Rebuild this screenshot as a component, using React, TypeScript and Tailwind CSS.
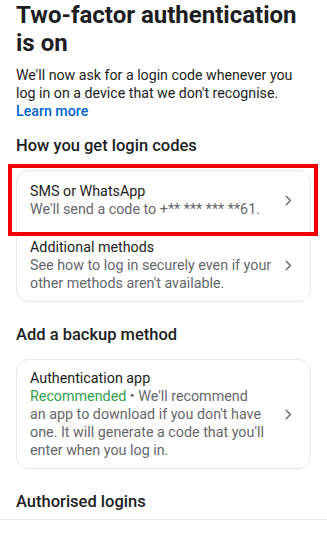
import React from 'react';

function Chevron() {
  return (
    <svg width="7" height="11" viewBox="0 0 7 11" fill="none" className="shrink-0">
      <path d="M1.3 1.3 5.4 5.5 1.3 9.7" stroke="#65676b" strokeWidth="1.4" strokeLinecap="round" strokeLinejoin="round" />
    </svg>
  );
}

interface OptionRowProps {
  title: string;
  children: React.ReactNode;
  className?: string;
}

function OptionRow({ title, children, className }: OptionRowProps) {
  return (
    <div className={`flex items-center pl-[13px] pr-[18px] ${className ?? ''}`}>
      <div className="flex-1 min-w-0 pr-3">
        <div className="text-[14.3px] leading-[18px] text-[#1c1e21]">{title}</div>
        <div className="text-[14.3px] leading-[18px] text-[#65676b]">{children}</div>
      </div>
      <Chevron />
    </div>
  );
}

export default function App() {
  return (
    <div className="min-h-[539px] bg-white px-4 pt-px font-['Roboto','Noto_Sans',sans-serif]">
      <h1 className="text-[24px] leading-[28px] font-bold text-[#1c1e21]">
        Two-factor authentication is on
      </h1>

      <p className="mt-[9px] text-[14.2px] leading-[18px] text-[#1c1e21]">
        We'll now ask for a login code whenever you log in on a device that we don't recognise.{' '}
        <span className="block font-medium text-[#0064d1]">Learn more</span>
      </p>

      <h2 className="mt-[15px] text-[16.5px] leading-[22px] font-medium text-[#1c1e21]">
        How you get login codes
      </h2>

      <div className="relative mt-[13px] rounded-xl border border-[#e4e6eb]">
        <OptionRow title="SMS or WhatsApp" className="pt-[11px] pb-[11px]">
          We'll send a code to +** *** *** **61.
        </OptionRow>
        <OptionRow title="Additional methods" className="pt-[9px] pb-[9px]">
          See how to log in securely even if your other methods aren't available.
        </OptionRow>
        <div className="pointer-events-none absolute left-[-9px] top-[-7px] h-[72px] w-[310px] border-4 border-[#ee0000]" />
      </div>

      <h2 className="mt-[22px] text-[16.5px] leading-[22px] font-medium text-[#1c1e21]">
        Add a backup method
      </h2>

      <div className="mt-[13px] rounded-xl border border-[#e4e6eb]">
        <OptionRow title="Authentication app" className="pt-[9px] pb-[9px]">
          <span className="text-[#31a24c]">Recommended</span> • We'll recommend an&nbsp;app to download if you don't have one. It will generate a code that you'll enter when you log in.
        </OptionRow>
      </div>

      <h2 className="mt-[22px] text-[16.5px] leading-[22px] font-medium text-[#1c1e21]">
        Authorised logins
      </h2>

      <div className="mt-[6px] -mx-4 border-t border-[#e4e6eb]" />
    </div>
  );
}
